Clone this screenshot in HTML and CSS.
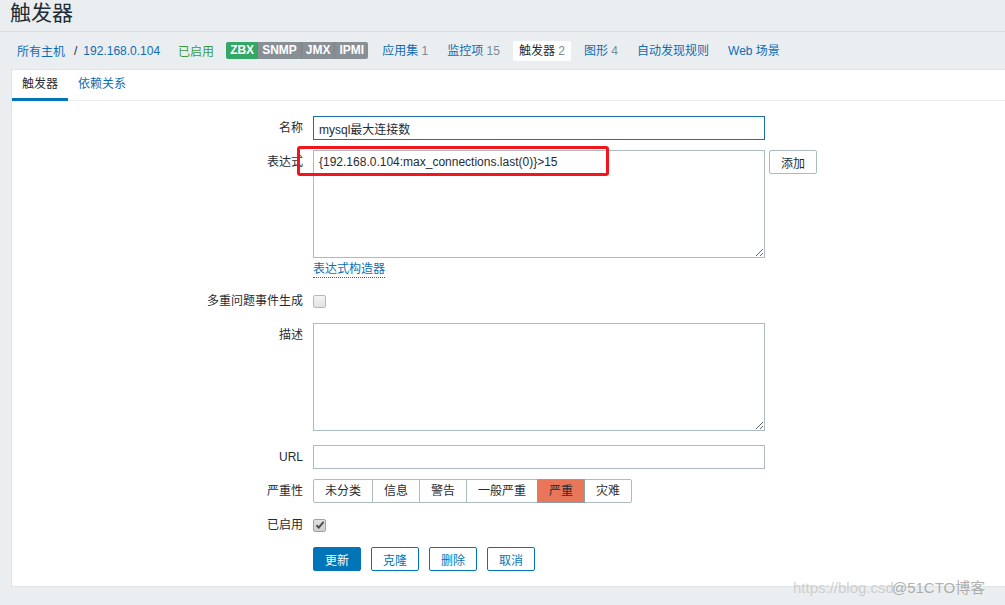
FILE: index.html
```html
<!DOCTYPE html>
<html lang="zh-CN">
<head>
<meta charset="utf-8">
<title>触发器</title>
<link rel="stylesheet" href="styles.css">
</head>
<body>
<header class="page-title">
  <h1>触发器</h1>
</header>
<nav class="host-nav">
  <a class="crumb" href="#">所有主机</a>
  <span class="sep">/</span>
  <a class="crumb" href="#">192.168.0.104</a>
  <span class="status-on">已启用</span>
  <span class="tags">
    <span class="tag tag-green">ZBX</span><span class="tag tag-gray">SNMP</span><span class="tag tag-gray">JMX</span><span class="tag tag-gray">IPMI</span>
  </span>
  <ul class="host-menu">
    <li><a href="#">应用集</a> <span class="count">1</span></li>
    <li><a href="#">监控项</a> <span class="count">15</span></li>
    <li class="selected"><a href="#">触发器</a> <span class="count">2</span></li>
    <li><a href="#">图形</a> <span class="count">4</span></li>
    <li><a href="#">自动发现规则</a></li>
    <li><a href="#">Web 场景</a></li>
  </ul>
</nav>

<section class="panel">
  <ul class="tabs">
    <li class="tab active">触发器</li>
    <li class="tab">依赖关系</li>
  </ul>
  <form class="form">
    <div class="row row-name">
      <label class="lbl">名称</label>
      <div class="field"><input class="text focused" type="text" value="mysql最大连接数"></div>
    </div>
    <div class="row row-expr">
      <label class="lbl">表达式</label>
      <div class="field">
        <div class="expr-line">
          <div class="expr-box">
            <textarea class="area">{192.168.0.104:max_connections.last(0)}>15</textarea>
            <span class="mark"></span>
          </div>
          <button type="button" class="btn-alt">添加</button>
        </div>
        <a class="builder" href="#">表达式构造器</a>
      </div>
    </div>
    <div class="row row-check">
      <label class="lbl">多重问题事件生成</label>
      <div class="field center"><span class="check"></span></div>
    </div>
    <div class="row row-desc">
      <label class="lbl">描述</label>
      <div class="field"><textarea class="area"></textarea></div>
    </div>
    <div class="row row-url">
      <label class="lbl">URL</label>
      <div class="field"><input class="text" type="text" value=""></div>
    </div>
    <div class="row row-sev">
      <label class="lbl">严重性</label>
      <div class="field">
        <div class="seg">
          <span class="seg-item">未分类</span><span class="seg-item">信息</span><span class="seg-item">警告</span><span class="seg-item">一般严重</span><span class="seg-item sel">严重</span><span class="seg-item">灾难</span>
        </div>
      </div>
    </div>
    <div class="row row-enabled">
      <label class="lbl">已启用</label>
      <div class="field center">
        <span class="check checked"><svg width="10" height="10" viewBox="0 0 10 10"><path d="M1.5 5.2 L3.8 7.6 L8.6 1.8" fill="none" stroke="#4b4f52" stroke-width="2"/></svg></span>
      </div>
    </div>
    <div class="row row-buttons">
      <span class="lbl"></span>
      <div class="field buttons">
        <button type="button" class="btn-main">更新</button>
        <button type="button" class="btn-out">克隆</button>
        <button type="button" class="btn-out">删除</button>
        <button type="button" class="btn-out">取消</button>
      </div>
    </div>
  </form>
</section>

<div class="watermark"><span class="wm-url">https://blog.csd</span><span class="wm-brand">@51CTO博客</span></div>
</body>
</html>
```

FILE: styles.css
```css
* { box-sizing: border-box; }

html, body {
  margin: 0;
  padding: 0;
}

body {
  background: #ebeef0;
  font-family: "Liberation Sans", "Noto Sans CJK SC", sans-serif;
  font-size: 12px;
  color: #1f2c33;
  position: relative;
  height: 605px;
  overflow: hidden;
}

a { color: #0f6cb3; text-decoration: none; }

.page-title {
  height: 32px;
  border-bottom: 1px solid #d9dee1;
}

.page-title h1 {
  margin: 0;
  padding: 0 10px;
  font-size: 21px;
  font-weight: normal;
  line-height: 25px;
  color: #1f2c33;
}

.host-nav {
  height: 37px;
  display: flex;
  align-items: center;
  padding-left: 17px;
  white-space: nowrap;
}

.sep { margin: 0 6px 0 9px; color: #1f2c33; }

.status-on { color: #3c9a47; margin-left: 18px; }

.tags {
  display: flex;
  margin-left: 12px;
  border-radius: 2px;
  overflow: hidden;
}

.tag {
  display: block;
  padding: 0 4px;
  line-height: 17px;
  height: 17px;
  font-weight: bold;
  color: #fff;
}

.tag-green { background: #33a764; }
.tag-gray { background: #888f95; border-left: 1px solid #7b8288; }
.tag-green + .tag-gray { border-left: none; }

.host-menu {
  list-style: none;
  margin: 0 0 0 1px;
  padding: 0;
  display: flex;
  align-items: center;
}

.host-menu li {
  padding: 0 6px;
  margin-left: 7px;
  line-height: 20px;
  height: 20px;
  border-radius: 2px;
}

.host-menu li.selected { background: #fff; }
.host-menu li.selected a { color: #1f2c33; }

.count { color: #768d99; }

.panel {
  margin-left: 11px;
  background: #fff;
  border: 1px solid #dfe4e7;
  border-right: none;
}

.tabs {
  list-style: none;
  margin: 0;
  padding: 0;
  display: flex;
  height: 31px;
  border-bottom: 1px solid #ebeef0;
}

.tab {
  padding: 0 10px;
  line-height: 28px;
  height: 31px;
  color: #0f6cb3;
  border-bottom: 3px solid transparent;
}

.tab.active {
  color: #1f2c33;
  border-bottom-color: #0275b8;
}

.form {
  padding: 15px 0 15px 0;
}

.row {
  display: grid;
  grid-template-columns: 291px 1fr;
  column-gap: 10px;
  margin-bottom: 10px;
}

.row-expr { margin-bottom: 11px; }
.row-desc { margin-bottom: 14px; }
.row-buttons { margin-bottom: 0; }

.lbl {
  text-align: right;
  line-height: 24px;
  white-space: nowrap;
}

.field { display: flex; flex-direction: column; align-items: flex-start; }
.field.center { height: 24px; justify-content: center; }

.text {
  width: 452px;
  height: 24px;
  border: 1px solid #acbbc2;
  padding: 0 5px;
  font: inherit;
  color: #1f2c33;
  outline: none;
  background: #fff;
}

.text.focused { border-color: #1f6eab; }

.expr-line { display: flex; align-items: flex-start; }

.expr-box { position: relative; }

.area {
  display: block;
  width: 452px;
  height: 108px;
  border: 1px solid #acbbc2;
  padding: 4px 5px;
  font: inherit;
  line-height: 14px;
  color: #1f2c33;
  outline: none;
  resize: vertical;
  background: #fff;
  overflow: hidden;
}

.mark {
  position: absolute;
  left: -16px;
  top: -4px;
  width: 312px;
  height: 30px;
  border: 3px solid #f0161b;
  border-radius: 3px;
  pointer-events: none;
}

.btn-alt {
  margin-left: 4px;
  width: 48px;
  height: 24px;
  background: #fff;
  border: 1px solid #acbbc2;
  border-radius: 2px;
  font: inherit;
  color: #1f2c33;
  padding: 0;
}

.builder {
  margin-top: 4px;
  line-height: 15px;
  border-bottom: 1px dotted #0f6cb3;
}

.check {
  display: flex;
  align-items: center;
  justify-content: center;
  width: 13px;
  height: 13px;
  border: 1px solid #acbbc2;
  border-radius: 2px;
  background: linear-gradient(#f4f4f4, #e2e2e2);
}

.check.checked { background: linear-gradient(#e0e0e0, #cfcfcf); border-color: #9aa5ab; }

.seg { display: flex; }

.seg-item {
  display: block;
  height: 24px;
  line-height: 22px;
  padding: 0 11px;
  border: 1px solid #acbbc2;
  margin-left: -1px;
  background: #fff;
  white-space: nowrap;
}

.seg-item:first-child { margin-left: 0; border-radius: 2px 0 0 2px; }
.seg-item:last-child { border-radius: 0 2px 2px 0; }

.seg-item.sel {
  background: #e97659;
  border-color: #8ca0ac;
  position: relative;
}

.buttons { flex-direction: row; gap: 10px; }

.btn-main, .btn-out {
  height: 24px;
  padding: 0 11px;
  border-radius: 2px;
  font: inherit;
  border: 1px solid #0275b8;
}

.btn-main { background: #0275b8; color: #fff; }
.btn-out { background: #fff; color: #0275b8; }

.watermark {
  position: absolute;
  left: 793px;
  top: 579px;
  font-size: 15px;
  line-height: 18px;
  white-space: nowrap;
  pointer-events: none;
}

.wm-url { color: rgba(200, 200, 200, 0.85); }
.wm-brand { color: rgba(150, 150, 150, 0.75); margin-left: -2px; }
```
